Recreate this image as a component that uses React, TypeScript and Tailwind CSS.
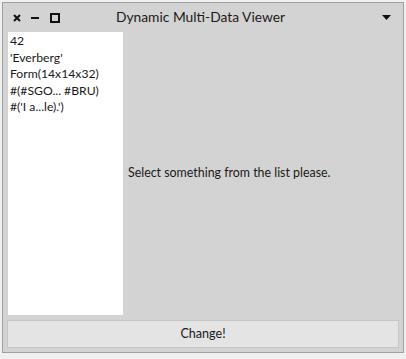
import { useState } from "react";

const items = ["42", "'Everberg'", "Form(14x14x32)", "#(#SGO... #BRU)", "#('I a...le).')"];

const App = () => {
  const [selected, setSelected] = useState<number | null>(null);

  return (
    <div className="w-[406px] h-[359px] bg-[#f0f0f0] p-[2px] pb-[6px] font-['Lato','Noto_Sans',sans-serif] text-[#1a1a1a]">
      <div className="flex h-full flex-col border border-[#a0a0a0] bg-[#d3d3d3]">
        {/* Title bar */}
        <div className="grid h-[29px] grid-cols-[1fr_auto_1fr] items-center pl-[10px] pr-[10px]">
          <div className="flex items-center gap-[10px]">
            <svg width="8" height="8" viewBox="0 0 8 8">
              <path d="M1 1L7 7M7 1L1 7" stroke="#111" strokeWidth="2" />
            </svg>
            <svg width="8" height="8" viewBox="0 0 8 8">
              <path d="M0 4H8" stroke="#111" strokeWidth="2" />
            </svg>
            <svg width="10" height="10" viewBox="0 0 10 10" className="ml-[1px]">
              <rect x="1" y="1" width="8" height="8" fill="none" stroke="#111" strokeWidth="2" />
            </svg>
          </div>
          <div className="mr-[5px] text-center text-[13.8px]">Dynamic Multi-Data Viewer</div>
          <div className="flex justify-end pr-[2px]">
            <svg width="9" height="5" viewBox="0 0 9 5">
              <path d="M0 0H9L4.5 5Z" fill="#111" />
            </svg>
          </div>
        </div>

        {/* Body */}
        <div className="flex flex-1 gap-[5px] pl-[5px] pr-[5px]">
          <ul className="w-[115px] bg-white px-[2px] pt-[1px] text-[12.2px] leading-[16.5px]">
            {items.map((item, i) => (
              <li
                key={item}
                onClick={() => setSelected(i)}
                className={selected === i ? "bg-[#b0c4de]" : ""}
              >
                {item}
              </li>
            ))}
          </ul>
          <div className="flex flex-1 items-center text-[12.4px]">
            Select something from the list please.
          </div>
        </div>

        {/* Button */}
        <div className="px-[4px] pt-[5px] pb-[4px]">
          <button className="h-[28px] w-full border border-[#c6c6c6] bg-[#e4e4e4] text-[12.6px]">
            Change!
          </button>
        </div>
      </div>
    </div>
  );
};

export default App;
